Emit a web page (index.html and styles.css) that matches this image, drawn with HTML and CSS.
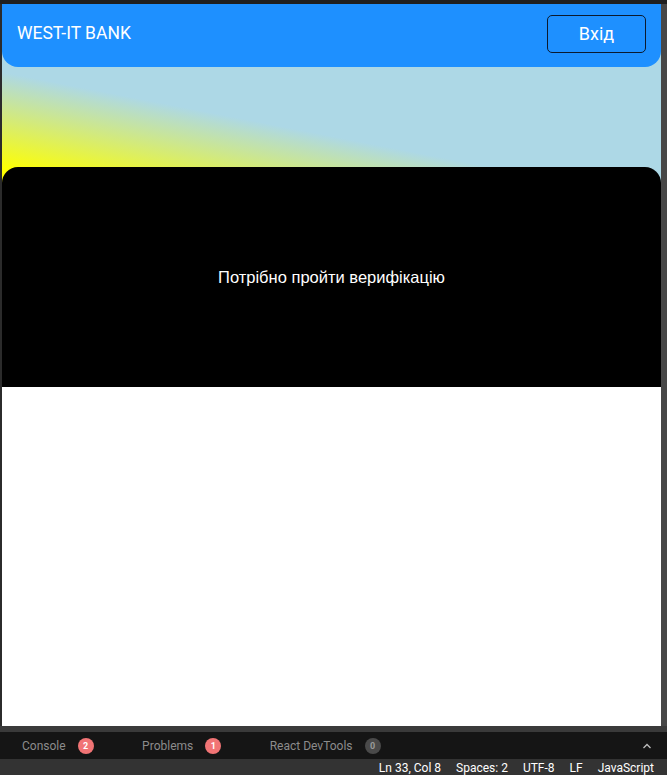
FILE: index.html
```html
<!DOCTYPE html>
<html lang="uk">
<head>
<meta charset="utf-8">
<title>WEST-IT BANK</title>
<link rel="stylesheet" href="styles.css">
</head>
<body>
<div class="frame">
  <div class="topstrip"></div>
  <div class="viewport">
    <div class="page">
      <div class="top">
        <header class="header">
          <div class="brand">WEST-IT BANK</div>
          <button class="login">Вхід</button>
        </header>
        <div class="hero"></div>
        <section class="card">
          <p class="card-text">Потрібно пройти верифікацію</p>
        </section>
      </div>
      <div class="rest"></div>
    </div>
  </div>
  <div class="divider"></div>
  <div class="panel">
    <div class="tab">Console <span class="badge red">2</span></div>
    <div class="tab">Problems <span class="badge red">1</span></div>
    <div class="tab">React DevTools <span class="badge grey">0</span></div>
    <div class="chev">
      <svg width="10" height="6" viewBox="0 0 10 6"><path d="M1.5 5 L5 1.5 L8.5 5" fill="none" stroke="#bdbdbd" stroke-width="1.3"/></svg>
    </div>
  </div>
  <div class="status">
    <span>Ln 33, Col 8</span>
    <span>Spaces: 2</span>
    <span>UTF-8</span>
    <span>LF</span>
    <span>JavaScript</span>
  </div>
</div>
</body>
</html>
```
FILE: styles.css
```css
html, body {
  margin: 0;
  padding: 0;
  background: #1f1f1f;
}
.frame {
  width: 667px;
  height: 775px;
  display: flex;
  flex-direction: column;
  overflow: hidden;
  font-family: Roboto, "Liberation Sans", sans-serif;
}
.topstrip {
  height: 4px;
  background: #1f1f1f;
  flex: none;
}
.viewport {
  height: 722px;
  flex: none;
  display: flex;
  border-left: 2px solid #2b2b2b;
  border-right: 6px solid #474747;
}
.page {
  flex: 1;
  display: flex;
  flex-direction: column;
  background: #ffffff;
}
.top {
  background-color: #add8e6;
  background-image: linear-gradient(11deg, #ffff00 14px, #add8e6 110px);
  background-size: 100% 180px;
  background-repeat: no-repeat;
}
.header {
  height: 63px;
  box-sizing: border-box;
  padding: 0 15px;
  background: #1e90ff;
  border-radius: 0 0 16px 16px;
  display: flex;
  align-items: center;
  justify-content: space-between;
}
.brand {
  color: #ffffff;
  font-family: Roboto, sans-serif;
  font-size: 17.5px;
  margin-top: -5px;
}
.login {
  width: 99px;
  height: 38px;
  margin-top: -4px;
  background: #1e90ff;
  border: 1px solid #0b1a2e;
  border-radius: 5px;
  color: #ffffff;
  font-family: Roboto, sans-serif;
  font-size: 18px;
  padding: 0;
  cursor: pointer;
}
.hero {
  height: 100px;
}
.card {
  height: 220px;
  background: #000000;
  border-radius: 16px 16px 0 0;
  display: flex;
  align-items: center;
  justify-content: center;
}
.card-text {
  margin: 0;
  color: #ffffff;
  font-family: "Liberation Sans", Arial, sans-serif;
  font-size: 16.5px;
}
.rest {
  flex: 1;
  background: #ffffff;
}
.divider {
  height: 6px;
  flex: none;
  background: #3a3a3a;
}
.panel {
  height: 27px;
  flex: none;
  background: #151515;
  display: flex;
  align-items: center;
  padding-left: 22px;
}
.tab {
  color: #8c8c8c;
  font-size: 12px;
  display: flex;
  align-items: center;
  gap: 12px;
  margin-right: 48.5px;
}
.badge {
  width: 16px;
  height: 16px;
  border-radius: 50%;
  display: inline-flex;
  align-items: center;
  justify-content: center;
  font-size: 9px;
  font-weight: 700;
}
.badge.red {
  background: #f17475;
  color: #ffffff;
}
.badge.grey {
  background: #4a4a4a;
  color: #9a9a9a;
}
.chev {
  margin-left: auto;
  margin-right: 15px;
  display: flex;
  align-items: center;
}
.status {
  height: 12px;
  flex: none;
  background: #333333;
  display: flex;
  justify-content: flex-end;
  align-items: flex-start;
  gap: 15px;
  padding: 3px 13px 1px 0;
  color: #ffffff;
  font-size: 12px;
  line-height: 13px;
  overflow: hidden;
}
```
